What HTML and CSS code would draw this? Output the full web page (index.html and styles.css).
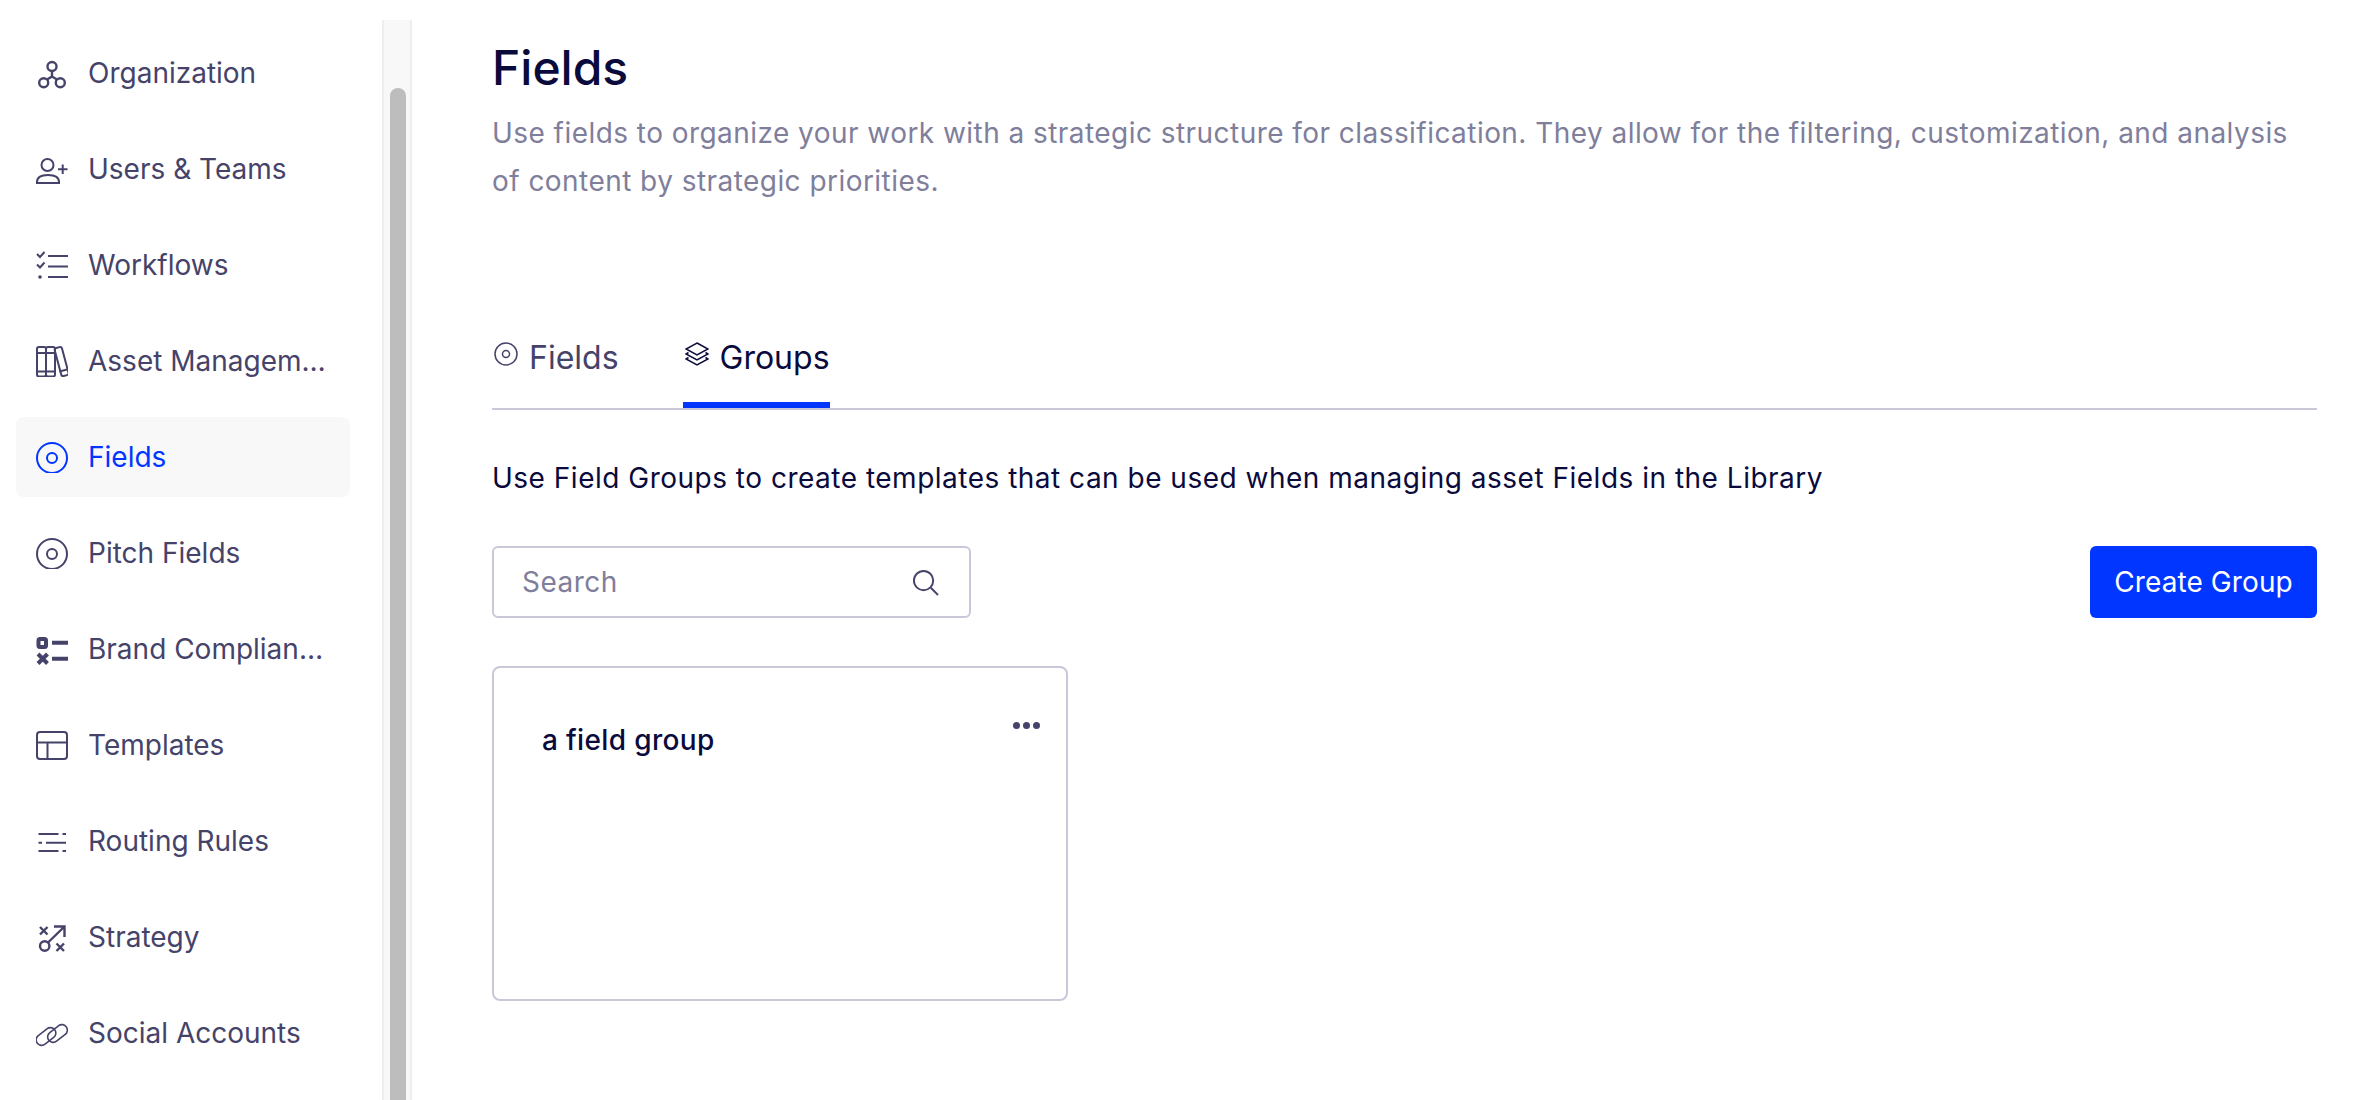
FILE: index.html
```html
<!DOCTYPE html>
<html lang="en">
<head>
<meta charset="utf-8">
<title>Fields</title>
<link rel="stylesheet" href="styles.css">
</head>
<body>
<div class="page">
  <aside class="sidebar">
    <nav class="nav">
      <a class="nav-item"><svg class="nav-icon" viewBox="0 0 32 32"><g class="mid"><circle cx="16" cy="9.500" r="4.500"/><circle cx="7.700" cy="25.700" r="4.500"/><circle cx="24.300" cy="25.700" r="4.500"/><path d="M16 14v5.500l-5 3M16 19.500l5 3"/></g></svg><span class="nav-label">Organization</span></a>
      <a class="nav-item"><svg class="nav-icon" viewBox="0 0 32 32"><circle cx="11.500" cy="12" r="6"/><path d="M1 30h22v-1c0-4.500-4-7-11-7S1 24.500 1 29zM22 16.300h9.500M26.700 11.500V21"/></svg><span class="nav-label">Users &amp; Teams</span></a>
      <a class="nav-item"><svg class="nav-icon" viewBox="0 0 32 32"><path d="M1 5l3 3 4.500-5M1 15.500l3 3 4.500-5M12 7h20M12 17.500h20M12 28h20"/><circle class="fill" cx="4" cy="28" r="1.800"/></svg><span class="nav-label">Workflows</span></a>
      <a class="nav-item"><svg class="nav-icon" viewBox="0 0 32 32"><rect x="1" y="2" width="9" height="29.500" rx="2"/><rect x="10" y="2" width="9" height="29.500" rx="2"/><path d="M1 8h18M1 26.500h18"/><rect x="22" y="2" width="7.500" height="29" rx="2" transform="rotate(-15 26 17)"/><path d="M23.500 26.500l7.500-2"/></svg><span class="nav-label">Asset Management</span></a>
      <a class="nav-item nav-item-active"><svg class="nav-icon" viewBox="0 0 32 32"><circle cx="16" cy="17" r="15"/><circle cx="16" cy="17" r="5"/></svg><span class="nav-label">Fields</span></a>
      <a class="nav-item"><svg class="nav-icon" viewBox="0 0 32 32"><circle cx="16" cy="17" r="15"/><circle cx="16" cy="17" r="5"/></svg><span class="nav-label">Pitch Fields</span></a>
      <a class="nav-item"><svg class="nav-icon" viewBox="0 0 32 32"><rect class="thick" x="2.500" y="6" width="7.500" height="8" rx="1.500"/><path class="thick" d="M2 21l9.500 9.500M11.500 21L2 30.500M16 9.700h16M16 25.700h16"/></svg><span class="nav-label">Brand Compliance</span></a>
      <a class="nav-item"><svg class="nav-icon" viewBox="0 0 32 32"><rect x="1" y="3" width="30" height="27" rx="3"/><path d="M1 13.500h30M11.500 13.500V30"/></svg><span class="nav-label">Templates</span></a>
      <a class="nav-item"><svg class="nav-icon" viewBox="0 0 32 32"><path d="M2.500 9h20M26.500 9H30M2.500 17.700H6M10 17.700h20M2.500 26h20M26.500 26H30"/></svg><span class="nav-label">Routing Rules</span></a>
      <a class="nav-item"><svg class="nav-icon" viewBox="0 0 32 32"><path class="mid" d="M4 6l7.500 7.500M11.500 6L4 13.500M20.500 22.500L28 30M28 22.500L20.500 30"/><circle class="mid" cx="8.700" cy="25" r="4.700"/><path class="mid" d="M12 21.500L28 6M18 5.500h10.500V16"/></svg><span class="nav-label">Strategy</span></a>
      <a class="nav-item"><svg class="nav-icon thin" viewBox="0 0 32 32"><rect x="-1" y="14" width="22" height="11" rx="5.500" transform="rotate(-38 10 19.500)"/><rect x="10.500" y="11" width="22" height="11" rx="5.500" transform="rotate(-38 21.500 16.500)"/></svg><span class="nav-label">Social Accounts</span></a>
    </nav>
  </aside>
  <div class="scroll-track"><div class="scroll-thumb"></div></div>
  <main class="main">
    <h1 class="title">Fields</h1>
    <p class="description">Use fields to organize your work with a strategic structure for classification. They allow for the filtering, customization, and analysis of content by strategic priorities.</p>
    <div class="tabs">
      <a class="tab"><svg class="tab-icon" viewBox="0 0 24 24"><circle cx="12" cy="12" r="11"/><circle cx="12" cy="12" r="3.500"/></svg>Fields</a>
      <a class="tab tab-active"><svg class="tab-icon" viewBox="0 0 24 24"><path d="M12 1l11 6-11 6L1 7zM3.500 10.500L1 12l11 6 11-6-2.500-1.500M3.500 15.500L1 17l11 6 11-6-2.500-1.500"/></svg>Groups</a>
    </div>
    <p class="notice">Use Field Groups to create templates that can be used when managing asset Fields in the Library</p>
    <div class="toolbar">
      <div class="search">
        <span class="search-placeholder">Search</span>
        <svg class="search-icon" viewBox="0 0 28 28"><circle cx="12" cy="12" r="10"/><path d="M19.500 19.500L27 27"/></svg>
      </div>
      <button class="button" type="button">Create Group</button>
    </div>
    <section class="card">
      <h2 class="card-title">a field group</h2>
      <span class="card-menu"><i class="dot"></i><i class="dot"></i><i class="dot"></i></span>
    </section>
  </main>
</div>
</body>
</html>
```
FILE: styles.css
```css
* { box-sizing: border-box; }
html, body { margin: 0; padding: 0; background: #fff; }
body { font-family: Inter, "Noto Sans", sans-serif; color: #0a0a3c; }
.page { display: flex; height: 1100px; overflow: hidden; }

.sidebar { width: 382px; flex: none; padding: 33px 32px 0 16px; }
.nav { display: flex; flex-direction: column; gap: 16px; }
.nav-item { display: flex; align-items: center; gap: 20px; height: 80px; padding-left: 20px; border-radius: 8px; color: #454369; font-size: 28px; }
.nav-item-active { background: #f8f8f8; color: #0036ff; }
.nav-icon { width: 32px; height: 32px; flex: none; fill: none; stroke: currentColor; stroke-width: 2; }
.nav-icon .fill { fill: currentColor; stroke: none; }
.nav-icon .thick { stroke-width: 4; }
.nav-icon .mid { stroke-width: 2.400; }
.nav-icon.thin { stroke-width: 1.600; }
.nav-label { min-width: 0; overflow: hidden; white-space: nowrap; text-overflow: ellipsis; padding-right: 23px; }

.scroll-track { width: 30px; flex: none; margin-top: 20px; padding: 68px 4px 0 6px; background: #f8f8f8; border-left: 2px solid #eeeeee; border-right: 2px solid #eeeeee; }
.scroll-thumb { width: 16px; height: 100%; background: #bdbdbd; border-radius: 8px 8px 0 0; }

.main { flex: 1; min-width: 0; padding: 38px 53px 0 80px; }
.title { margin: 0; font-size: 48px; line-height: 60px; font-weight: 500; color: #0a0a3c; }
.description { margin: 11px 0 0; font-size: 28px; line-height: 48px; letter-spacing: 0.45px; color: #7f7e9b; }

.tabs { display: flex; gap: 64px; margin-top: 105px; border-bottom: 2px solid #c9c8d8; }
.tab { display: flex; align-items: flex-start; gap: 11px; padding: 28px 0 24px; border-bottom: 6px solid transparent; font-size: 32px; line-height: 40px; color: #454369; }
.tab-active { border-bottom-color: #0036ff; color: #0a0a3c; }
.tab-icon { width: 24px; height: 24px; margin: 4px 0 0 2px; flex: none; fill: none; stroke: currentColor; stroke-width: 1.500; }

.notice { margin: 48px 0 0; font-size: 28px; line-height: 40px; letter-spacing: 0.5px; color: #0a0a3c; }

.toolbar { display: flex; justify-content: space-between; margin-top: 48px; }
.search { display: flex; align-items: center; justify-content: space-between; width: 479px; height: 72px; padding: 0 30px 0 28px; border: 2px solid #c9c8d8; border-radius: 6px; }
.search-placeholder { font-size: 28px; letter-spacing: 0.5px; color: #7f7e9b; }
.search-icon { width: 27px; height: 27px; fill: none; stroke: #454369; stroke-width: 2; }
.button { width: 227px; height: 72px; padding: 0; border: 0; border-radius: 6px; background: #0036ff; color: #fff; font-family: inherit; font-size: 28px; letter-spacing: 0.1px; }

.card { position: relative; width: 576px; height: 335px; margin-top: 48px; padding: 52px 48px; border: 2px solid #c9c8d8; border-radius: 8px; }
.card-title { margin: 0; font-size: 28px; line-height: 40px; font-weight: 500; letter-spacing: 0.35px; color: #0a0a3c; }
.card-menu { position: absolute; top: 54px; right: 26px; display: flex; gap: 3px; }
.dot { width: 7px; height: 7px; border-radius: 50%; background: #454369; }
```
